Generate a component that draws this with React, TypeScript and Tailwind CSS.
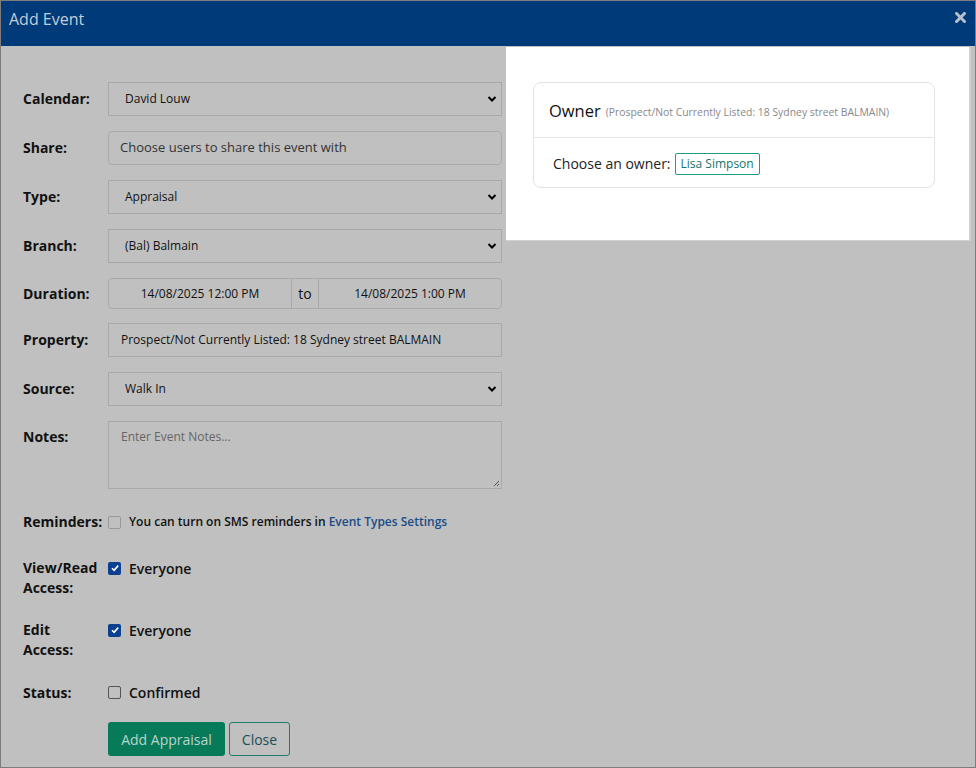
import React from "react";

const Chevron = () => (
  <svg width="10" height="8" viewBox="0 0 10 8" className="absolute right-[4px] top-1/2 -translate-y-1/2">
    <path d="M1.5 2 L5 5.5 L8.5 2" stroke="#000" strokeWidth="2" fill="none" />
  </svg>
);

const Label = ({ children }: { children: React.ReactNode }) => (
  <div className="w-[85px] shrink-0 text-[14px] font-bold text-[#111] leading-[20px]">{children}</div>
);

const SelectBox = ({ value }: { value: string }) => (
  <div className="relative w-[394px] h-[34px] border border-[#a9a9a9] flex items-center pl-[16px] text-[12px] text-[#111]">
    {value}
    <Chevron />
  </div>
);

const Check = ({ checked }: { checked: boolean }) =>
  checked ? (
    <div className="w-[13px] h-[13px] rounded-[2px] bg-[#0b3f8f] flex items-center justify-center">
      <svg width="10" height="10" viewBox="0 0 10 10">
        <path d="M2 5.2 L4.1 7.3 L8.2 2.6" stroke="#fff" strokeWidth="1.6" fill="none" />
      </svg>
    </div>
  ) : (
    <div className="w-[13px] h-[13px] rounded-[2px] border border-[#555] bg-[#c0c0c0]" />
  );

export default function App() {
  return (
    <div
      className="relative w-[976px] h-[768px] border border-[#7d7d7d] flex flex-col overflow-hidden bg-[#c0c0c0]"
      style={{ fontFamily: '"Open Sans", "Liberation Sans", sans-serif' }}
    >
      <div className="h-[45px] shrink-0 bg-[#003a78] flex items-start justify-between pl-[8px] pr-[9px] pt-[6px]">
        <span className="text-[16px] leading-[24px] text-[#c3cdd9]">Add Event</span>
        <svg width="11" height="11" viewBox="0 0 11 11" className="mt-[5px]">
          <path d="M1.5 1.5 L9.5 9.5 M9.5 1.5 L1.5 9.5" stroke="#b6c0cc" strokeWidth="3" strokeLinecap="square" />
        </svg>
      </div>

      <div className="flex-1 pl-[22px] pt-[36px] flex flex-col">
        <div className="flex items-center gap-0">
          <Label>Calendar:</Label>
          <SelectBox value="David Louw" />
        </div>
        <div className="flex items-center mt-[15px]">
          <Label>Share:</Label>
          <div className="w-[394px] h-[34px] border border-[#a9a9a9] rounded-[4px] flex items-center pl-[11px] text-[13px] text-[#333]">
            Choose users to share this event with
          </div>
        </div>
        <div className="flex items-center mt-[15px]">
          <Label>Type:</Label>
          <SelectBox value="Appraisal" />
        </div>
        <div className="flex items-center mt-[15px]">
          <Label>Branch:</Label>
          <SelectBox value="(Bal) Balmain" />
        </div>
        <div className="flex items-center mt-[15px]">
          <Label>Duration:</Label>
          <div className="w-[394px] h-[31px] border border-[#a9a9a9] rounded-[4px] flex text-[12px] text-[#111]">
            <div className="w-[183px] flex items-center justify-center border-r border-[#a9a9a9]">14/08/2025 12:00 PM</div>
            <div className="w-[27px] flex items-center justify-center text-[14px] border-r border-[#a9a9a9]">to</div>
            <div className="flex-1 flex items-center justify-center">14/08/2025 1:00 PM</div>
          </div>
        </div>
        <div className="flex items-center mt-[14px]">
          <Label>Property:</Label>
          <div className="w-[394px] h-[34px] border border-[#a9a9a9] flex items-center pl-[12px] text-[12px] text-[#111]">
            Prospect/Not Currently Listed: 18 Sydney street BALMAIN
          </div>
        </div>
        <div className="flex items-center mt-[15px]">
          <Label>Source:</Label>
          <SelectBox value="Walk In" />
        </div>
        <div className="flex items-start mt-[15px]">
          <div className="pt-[6px]">
            <Label>Notes:</Label>
          </div>
          <div className="relative w-[394px] h-[68px] border border-[#a9a9a9] pl-[12px] pt-[6px] text-[12px] text-[#666]">
            Enter Event Notes...
            <svg width="8" height="8" viewBox="0 0 8 8" className="absolute right-[1px] bottom-[1px]">
              <path d="M7 2 L2 7 M7 5 L5 7" stroke="#555" strokeWidth="1" />
            </svg>
          </div>
        </div>
        <div className="flex items-center mt-[23px]">
          <Label>Reminders:</Label>
          <div className="w-[13px] h-[13px] rounded-[2px] border border-[#999]" />
          <span className="ml-[8px] text-[12px] font-semibold text-[#111]">
            You can turn on SMS reminders in <span className="text-[#1a4c86] font-semibold">Event Types Settings</span>
          </span>
        </div>
        <div className="flex items-start mt-[26px]">
          <Label>
            View/Read
            <br />
            Access:
          </Label>
          <div className="flex items-center h-[20px]">
            <Check checked />
            <span className="ml-[8px] text-[14px] font-semibold text-[#111]">Everyone</span>
          </div>
        </div>
        <div className="flex items-start mt-[22px]">
          <Label>
            Edit
            <br />
            Access:
          </Label>
          <div className="flex items-center h-[20px]">
            <Check checked />
            <span className="ml-[8px] text-[14px] font-semibold text-[#111]">Everyone</span>
          </div>
        </div>
        <div className="flex items-center mt-[22px]">
          <Label>Status:</Label>
          <Check checked={false} />
          <span className="ml-[8px] text-[14px] font-semibold text-[#111]">Confirmed</span>
        </div>
        <div className="flex mt-[19px] ml-[85px] gap-[4px]">
          <div className="w-[117px] h-[34px] rounded-[3px] bg-[#077a5a] flex items-center justify-center text-[14px] text-[#b9d5cb]">
            Add Appraisal
          </div>
          <div className="w-[61px] h-[34px] rounded-[3px] border border-[#207c68] flex items-center justify-center text-[14px] text-[#1d4d55]">
            Close
          </div>
        </div>
      </div>

      <div className="absolute left-[505px] top-[46px] w-[465px] h-[194px] bg-white border-r-[2px] border-b border-[#d0d0d0] px-[27px] pt-[35px]">
        <div className="w-[402px] h-[106px] border border-[#e3e3e3] rounded-[8px] flex flex-col">
          <div className="h-[55px] flex items-center pl-[15px] pt-[2px] border-b border-[#e3e3e3]">
            <span className="text-[16.5px] text-[#111]">Owner</span>
            <span className="ml-[5px] mt-[3px] text-[10.4px] text-[#888]">(Prospect/Not Currently Listed: 18 Sydney street BALMAIN)</span>
          </div>
          <div className="flex-1 flex items-center pl-[19px] pt-[2px]">
            <span className="text-[14px] text-[#222]">Choose an owner:</span>
            <div className="ml-[4px] h-[22px] px-[5px] border border-[#1f9c88] rounded-[2px] flex items-center text-[12px] text-[#17756a]">
              Lisa Simpson
            </div>
          </div>
        </div>
      </div>
    </div>
  );
}
